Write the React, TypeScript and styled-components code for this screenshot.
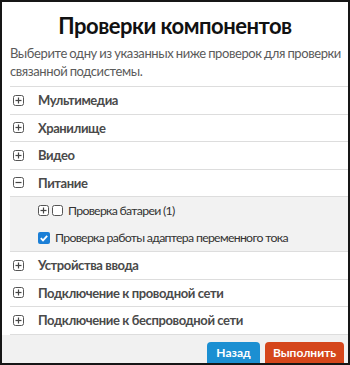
import styled, { createGlobalStyle } from 'styled-components';

const Global = createGlobalStyle`
    html, body {
        margin: 0;
        padding: 0;
        background: #ffffff;
    }
    body {
        font-family: Lato, 'Open Sans', sans-serif;
    }
`;

const Frame = styled.div`
    box-sizing: border-box;
    width: 350px;
    height: 365px;
    border: 2px solid #161616;
    background: #ffffff;
    display: flex;
    flex-direction: column;
    overflow: hidden;
`;

const Title = styled.h1`
    margin: 10px 0 0;
    text-align: center;
    font-size: 22px;
    font-weight: 700;
    color: #111111;
    letter-spacing: -0.5px;
    line-height: 28px;
`;

const Subtitle = styled.p`
    margin: 4px 2px 0 8px;
    font-size: 13px;
    line-height: 18px;
    color: #5a5a5a;
    letter-spacing: -0.4px;
    word-spacing: -0.5px;
`;

const List = styled.div`
    margin: 6px 0 0 8px;
    border-top: 1px solid #dddddd;
`;

const Row = styled.div`
    display: flex;
    align-items: center;
    height: 26.5px;
    padding-left: 3px;
    border-bottom: 1px solid #dddddd;
`;

const Label = styled.span`
    font-size: 13px;
    font-weight: 700;
    color: #4a4a4a;
    letter-spacing: -0.4px;
    margin-left: 14px;
`;

const Sub = styled.div`
    background: #f2f2f2;
    border-bottom: 1px solid #dddddd;
    padding-left: 28px;
`;

const SubRow = styled.div`
    display: flex;
    align-items: center;
    gap: 3px;
    height: 27px;
`;

const SubLabel = styled.span`
    font-size: 12.3px;
    color: #333333;
    letter-spacing: -0.7px;
    margin-left: 2px;
`;

const Footer = styled.div`
    flex: 1;
    background: #f1f1f1;
    display: flex;
    justify-content: flex-end;
    align-items: flex-end;
    gap: 5px;
    padding: 0 4px 0 0;
`;

const Button = styled.button<{ $tone: 'blue' | 'red' }>`
    border: none;
    height: 21px;
    width: ${(p) => (p.$tone === 'blue' ? '53px' : '79px')};
    padding: 0;
    border-radius: 4px 4px 0 0;
    background: ${(p) => (p.$tone === 'blue' ? '#1b8fd2' : '#d5461b')};
    color: #ffffff;
    font-family: Lato, sans-serif;
    font-size: 12px;
    font-weight: 700;
`;

function Toggle({ open = false }: { open?: boolean }) {
    return (
        <svg width="11" height="11" viewBox="0 0 11 11">
            <rect x="0.5" y="0.5" width="10" height="10" rx="2" fill="#fff" stroke="#555" />
            <path d="M2.5 5.5h6" stroke="#444" strokeWidth="1.2" />
            {!open && <path d="M5.5 2.5v6" stroke="#444" strokeWidth="1.2" />}
        </svg>
    );
}

function Check({ checked = false }: { checked?: boolean }) {
    return checked ? (
        <svg width="12" height="12" viewBox="0 0 12 12">
            <rect x="0" y="0" width="12" height="12" rx="2" fill="#1b7fd6" />
            <path d="M2.8 6.2l2.2 2.2 4.2-4.6" stroke="#fff" strokeWidth="1.8" fill="none" />
        </svg>
    ) : (
        <svg width="11" height="11" viewBox="0 0 11 11">
            <rect x="0.5" y="0.5" width="10" height="10" rx="2" fill="#fff" stroke="#555" />
        </svg>
    );
}

const groups = ['Мультимедиа', 'Хранилище', 'Видео'];
const after = ['Устройства ввода', 'Подключение к проводной сети', 'Подключение к беспроводной сети'];

export default function App() {
    return (
        <>
            <Global />
            <Frame>
                <Title>Проверки компонентов</Title>
                <Subtitle>Выберите одну из указанных ниже проверок для проверки связанной подсистемы.</Subtitle>
                <List>
                    {groups.map((g) => (
                        <Row key={g}>
                            <Toggle />
                            <Label>{g}</Label>
                        </Row>
                    ))}
                    <Row>
                        <Toggle open />
                        <Label>Питание</Label>
                    </Row>
                    <Sub>
                        <SubRow>
                            <Toggle />
                            <Check />
                            <SubLabel>Проверка батареи (1)</SubLabel>
                        </SubRow>
                        <SubRow>
                            <Check checked />
                            <SubLabel>Проверка работы адаптера переменного тока</SubLabel>
                        </SubRow>
                    </Sub>
                    {after.map((g) => (
                        <Row key={g}>
                            <Toggle />
                            <Label>{g}</Label>
                        </Row>
                    ))}
                </List>
                <Footer>
                    <Button $tone="blue">Назад</Button>
                    <Button $tone="red">Выполнить</Button>
                </Footer>
            </Frame>
        </>
    );
}
